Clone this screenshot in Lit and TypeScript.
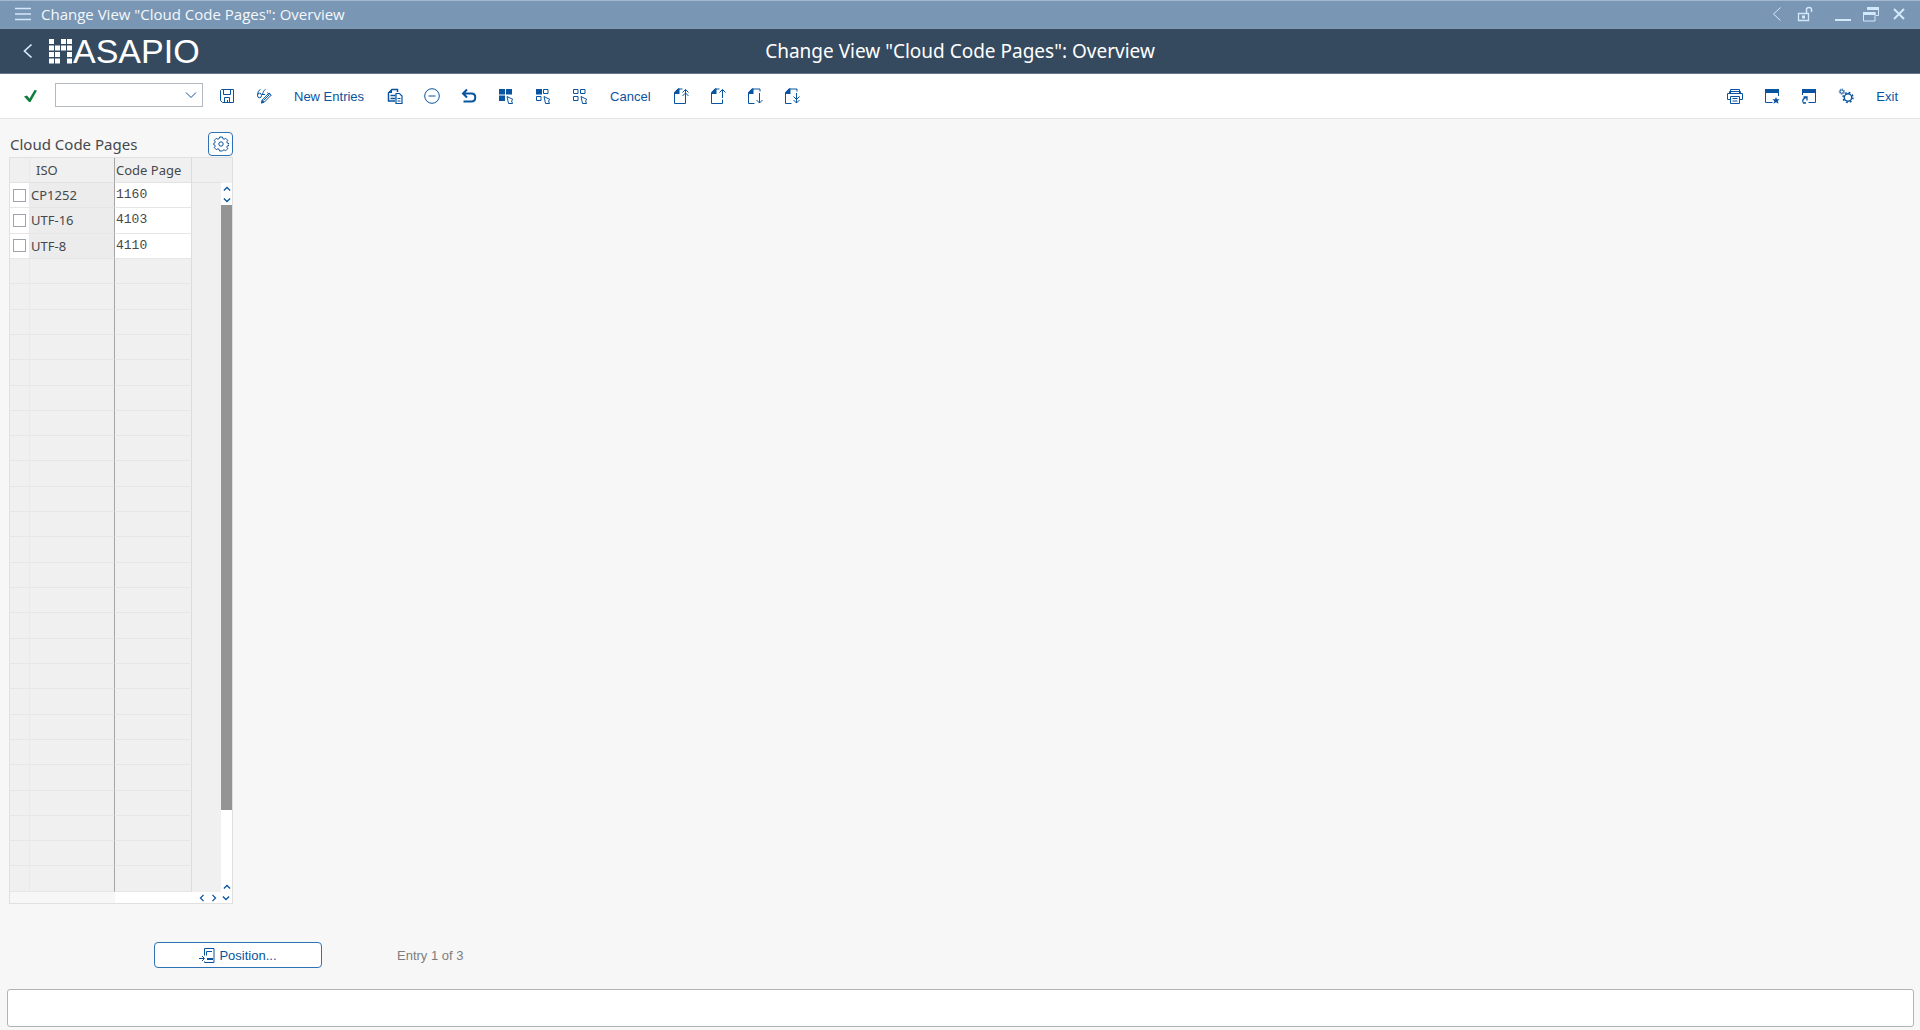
import { LitElement, html, css, svg } from "lit";
import { customElement } from "lit/decorators.js";

const TITLE = 'Change View "Cloud Code Pages": Overview';

const rows = [
  { iso: "CP1252", page: "1160" },
  { iso: "UTF-16", page: "4103" },
  { iso: "UTF-8", page: "4110" },
];
const emptyRows = Array.from({ length: 25 });

const cursor = svg`<path d="M9 8.5l6 3-1.500 1.200 1 2.800H10.500z"/>`;
const fold = svg`<path class="solid" d="M1 6V4.500L5 .5h1.500V6z"/>`;
const sheet = svg`<path d="M9.500 1H5L1.500 5v10.500h11"/>${fold}`;
const sheetOpen = svg`<path d="M13 3.500V1H5L1.500 5v10.500h6"/>${fold}`;

const icons = {
  menu: svg`<path d="M0 2.500h16M0 8h16M0 13.500h16" stroke-width="1.500"/>`,
  back: svg`<path d="M11.500 1.500L4.500 8l7 6.500"/>`,
  backBold: svg`<path d="M11.500 1.500L4.500 8l7 6.500" stroke-width="1.700"/>`,
  check: svg`<path class="solid" d="M2 8.500l3-1 2.500 3L12.500 2l2.500.5L8.500 14H7z"/>`,
  chevron: svg`<path d="M3 5.500l5 5 5-5"/>`,
  save: svg`<path d="M1.500 2.500l1-1h12v13h-11l-2-2zM4.500 1.500v5h7v-5M5.500 14.500v-5h5v5M8.500 12v2.500"/>`,
  glasses: svg`<path d="M4.500 1.500C2.500 2 1.500 5 1.500 7.500M9.500 1.500C8 2 7 4 6.500 6.500M1.500 7.500a2 2.300 0 1 0 4 0a2 2.300 0 1 0-4 0M5.500 6.500H9"/><path d="M5.500 15l.7-3L13 5l2.300 2L8.500 14z"/><path d="M11.500 4.500l2 2.500M7.500 12.500l5.500-5.500"/><path class="solid" d="M5 15.500l1-3.500 2.500 2z"/>`,
  copy: svg`<path class="solid" d="M1 5L5 1v4z"/><path d="M10.500 4V1.500H5L1.500 5v8H8M3.500 7.500h5M3.500 10.500h5" stroke-width="1.500"/><path d="M9 5.500h3.500l2.500 2.500v7.500H9z" stroke-width="1.200"/><path d="M10.500 10.500h3M10.500 13h3"/>`,
  minus: svg`<circle cx="8" cy="8" r="7.300"/><path d="M4.500 8h7"/>`,
  undo: svg`<path d="M6 1.500L2 5.500l4 4M2.500 5.500h8c5 0 5 8 0 8H2.500" stroke-width="2"/>`,
  selectAll: svg`<path class="solid" d="M1 1h6v5.500H1zM8 1h6v5.500H8zM1 7.500h6V13H1z"/>${cursor}`,
  selectBlock: svg`<path class="solid" d="M1 1h6v5.500H1z"/><path d="M8.500 1.500h4.500v4H8.500zM1.500 8.500h4.500v4H1.500z"/>${cursor}`,
  deselect: svg`<path d="M1.500 1.500h4.500v4H1.500zM8.500 1.500h4.500v4H8.500zM1.500 8.500h4.500v4H1.500z"/>${cursor}`,
  firstPage: svg`${sheet}<path d="M12.500 15.500V1.500M9.500 4.500l3-3 3 3M9.500 8l3-3 3 3"/>`,
  prevPage: svg`${sheet}<path d="M12.500 15.500v-4M12.500 10V1.500M9.500 4.500l3-3 3 3"/>`,
  nextPage: svg`${sheetOpen}<path d="M12.500 5v10M9.500 12l3 3 3-3"/>`,
  lastPage: svg`${sheetOpen}<path d="M12.500 5v10M9.500 8.500l3 3 3-3M9.500 12l3 3 3-3"/>`,
  print: svg`<path d="M3.500 5V1.500h9V5M3.500 11.500h-3V5.500h15v6h-3M2.500 5V3.500h11V5"/><path d="M3.500 8.500h9v7h-9zM5.500 10.500h5M5.500 13h5"/>`,
  newWindow: svg`<path class="solid" d="M1 1h14v4H1z"/><path d="M1.500 2v12.500h7M14.500 4v4"/><path class="solid" d="M12 9l1 2.300h2.700l-2 1.800.8 2.600-2.500-1.500-2.500 1.500.8-2.600-2-1.800H11z"/>`,
  shortcut: svg`<path class="solid" d="M1 1h14v4H1z"/><path d="M1.500 2v5M14.500 2v12.500H7.500"/><path d="M2.500 9H6v3.500M6 9c-4 1-5.500 4-3.500 6H5" stroke-width="1.300"/>`,
  gears: svg`<circle cx="10" cy="9.500" r="3.700" stroke-width="1.400"/><circle cx="10" cy="9.500" r="5" stroke-dasharray="1.900 2.027" stroke-width="1.400"/><circle cx="3.800" cy="3.600" r="1.700"/><circle cx="3.800" cy="3.600" r="2.600" stroke-dasharray="1 1.042"/>`,
  lock: svg`<path d="M1.500 7.500h10v7h-10z" stroke-width="1.300"/><path d="M9.500 7V3.500c0-2.800 5-2.800 5 0V6" stroke-width="1.500"/><path class="solid" d="M5 9.500h3v3H5z"/>`,
  minimize: svg`<path d="M0 14h16" stroke-width="2"/>`,
  restore: svg`<path d="M4.500 3.500v-2h11v8H13"/><path class="solid" d="M4 1h12v3H4z"/><path d="M.5 6.500H12V15H.5z"/><path class="solid" d="M0 6h12.500v3H0z"/>`,
  close: svg`<path d="M3 3l10 10M13 3L3 13" stroke-width="2"/>`,
  gear: svg`<circle cx="8" cy="8" r="2.200"/><path d="M6.600 1h2.800l.5 1.700 1.200.5 1.600-.9 2 2-.9 1.600.5 1.200 1.700.5v1.800l-1.700.5-.5 1.200.9 1.600-2 2-1.600-.9-1.200.5L9.400 15H6.600l-.5-1.700-1.200-.5-1.600.9-2-2 .9-1.600-.5-1.200L.5 8.400V7.600l1.200-.5.5-1.200-.9-1.600 2-2 1.600.9 1.200-.5z"/>`,
  position: svg`<path d="M5.500 8.500v-7H15v14M7.500 4.500H13M7.500 4.500v4M5.500 14.500v1H15"/><path class="solid" d="M8 11h6v2H8z"/><path d="M0 11.500h5M3 9l2.500 2.500L3 14"/>`,
};

const icon = (name: keyof typeof icons) =>
  html`<svg class="icon" viewBox="0 0 16 16" aria-hidden="true">${icons[name]}</svg>`;

type Tool = { icon?: keyof typeof icons; label: string };

const tools: Tool[] = [
  { icon: "save", label: "Save" },
  { icon: "glasses", label: "Display/Change" },
  { label: "New Entries" },
  { icon: "copy", label: "Copy As" },
  { icon: "minus", label: "Delete" },
  { icon: "undo", label: "Undo Change" },
  { icon: "selectAll", label: "Select All" },
  { icon: "selectBlock", label: "Select Block" },
  { icon: "deselect", label: "Deselect All" },
  { label: "Cancel" },
  { icon: "firstPage", label: "First Page" },
  { icon: "prevPage", label: "Previous Page" },
  { icon: "nextPage", label: "Next Page" },
  { icon: "lastPage", label: "Last Page" },
];

const endTools: Tool[] = [
  { icon: "print", label: "Print" },
  { icon: "newWindow", label: "New Window" },
  { icon: "shortcut", label: "Create Shortcut" },
  { icon: "gears", label: "Settings" },
  { label: "Exit" },
];

// Filled cells of the 4 x 4 logo mark.
const logoCells = [
  [0, 0], [2, 0], [3, 0],
  [0, 1], [1, 1], [2, 1], [3, 1],
  [0, 2], [1, 2], [3, 2],
  [0, 3], [1, 3], [3, 3],
];

@customElement("app-root")
export class AppRoot extends LitElement {
  static styles = css`
    :host {
      display: flex;
      flex-direction: column;
      min-height: 100vh;
      background: #f7f7f7;
      color: #45484b;
      font-family: "Noto Sans", "Liberation Sans", sans-serif;
      font-size: 13px;
    }
    * { box-sizing: border-box; }
    button {
      display: flex;
      align-items: center;
      justify-content: center;
      padding: 0;
      border: 0;
      background: none;
      color: inherit;
      font: inherit;
    }
    .icon {
      display: block;
      flex: none;
      width: 16px;
      height: 16px;
      fill: none;
      stroke: currentColor;
    }
    .solid { fill: currentColor; stroke: none; }

    .window-bar {
      display: flex;
      align-items: center;
      height: 29px;
      padding: 0 13px 2px 15px;
      border-top: 1px solid #a3b8ce;
      border-bottom: 1px solid #8299b1;
      background: #7996b5;
      color: #d3e8fb;
    }
    .window-title {
      flex: 1;
      margin-left: 10px;
      color: #f4f8fb;
      font-family: "Open Sans", "Noto Sans", sans-serif;
      font-size: 15px;
      line-height: 22px;
    }
    .window-actions { display: flex; gap: 12px; }
    .spaced { margin-left: 10px; }

    .header {
      display: grid;
      grid-template-columns: 1fr auto 1fr;
      align-items: center;
      height: 45px;
      padding: 0 20px;
      border-bottom: 1px solid #64768a;
      background: #354a5f;
      color: #fff;
    }
    .brand { display: flex; align-items: center; gap: 13px; }
    .back { color: #d1e8ff; }
    .logo {
      display: flex;
      align-items: center;
      gap: 1px;
      font: 34px/40px "Liberation Sans", sans-serif;
    }
    .logo-mark { width: 23px; height: 25px; fill: #fff; }
    h1 { margin: 0; font-size: 19px; line-height: 28px; font-weight: 400; }

    .toolbar {
      display: flex;
      align-items: center;
      gap: 8px;
      height: 45px;
      padding: 0 14px 0 15px;
      border-bottom: 1px solid #e4e4e4;
      background: #fff;
      color: #0854a0;
      font-family: "Liberation Sans", sans-serif;
    }
    .tool { width: 29px; height: 26px; }
    .tool.text { width: auto; padding: 0 8px; }
    .accept { color: #107e3e; }
    .command {
      display: flex;
      width: 148px;
      height: 24px;
      margin: 0 1px 2px 3px;
      border: 1px solid #b5bac0;
      background: #fff;
    }
    .command input {
      flex: 1;
      min-width: 0;
      padding: 0 4px;
      border: 0;
      background: none;
      outline: 0;
    }
    .command button { width: 22px; }
    .push { margin-left: auto; }

    main { flex: 1; padding: 12px 9px 0; }
    .panel { width: 224px; }
    .panel-head {
      display: flex;
      align-items: center;
      justify-content: space-between;
      height: 26px;
      padding-left: 1px;
    }
    h2 { margin: 0; font-size: 15px; line-height: 24px; font-weight: 400; }
    .settings {
      width: 25px;
      height: 24px;
      border: 1px solid #2f72b4;
      border-radius: 4px;
      background: #fff;
      color: #0854a0;
    }
    .grid {
      display: grid;
      grid-template-columns: 1fr 11px;
      border: 1px solid #e0e0e0;
      background: #f0f0f0;
    }
    table {
      width: 100%;
      height: 734px;
      border-collapse: separate;
      border-spacing: 0;
      table-layout: fixed;
    }
    .col-pick { width: 20px; }
    .col-iso { width: 85px; }
    .col-page { width: 77px; }
    th {
      height: 25px;
      padding: 0 1px;
      border-bottom: 1px solid #e2e2e2;
      font-weight: 400;
      text-align: left;
    }
    td {
      height: 25px;
      padding: 0 1px;
      border-bottom: 1px solid #e6e6e6;
      line-height: 20px;
    }
    .pick { border-right: 1px solid #e9e9e9; }
    .iso { border-right: 1px solid #a6a6a6; }
    th.iso { padding-left: 6px; }
    .page { border-right: 1px solid #dcdcdc; }
    td.page { font-family: "Liberation Mono", monospace; }
    .filled .pick, .filled .page { background: #fff; }
    .filled .iso { background: #ececec; }
    td.filler { border-bottom-color: transparent; }
    .pick input {
      appearance: none;
      display: block;
      width: 13px;
      height: 13px;
      margin: 0 0 0 2px;
      border: 1px solid #9da4ab;
      background: #fff;
    }
    .vbar {
      display: flex;
      flex-direction: column;
      margin-top: 25px;
      background: #fff;
      color: #0854a0;
    }
    .vbar button, .hbar button { height: 11px; }
    .hbar button { width: 12px; }
    .vbar .icon, .hbar .icon { width: 10px; height: 10px; stroke-width: 2; }
    .thumb { height: 605px; background: #949494; }
    .track { flex: 1; }
    .hbar {
      display: flex;
      grid-column: 1 / -1;
      background: #fff;
      color: #0854a0;
    }
    .hlead { width: 105px; background: #f7f7f7; }
    .turn-left { transform: rotate(90deg); }
    .turn-right { transform: rotate(-90deg); }
    .turn-up { transform: rotate(180deg); }

    .actions {
      display: flex;
      align-items: center;
      gap: 75px;
      margin: 38px 0 20px 145px;
      color: #7d7d7d;
      font-family: "Liberation Sans", sans-serif;
    }
    .position {
      gap: 4px;
      width: 168px;
      height: 26px;
      border: 1px solid #2f72b4;
      border-radius: 4px;
      background: #fff;
      color: #0854a0;
    }
    .message {
      height: 38px;
      margin: 0 6px 3px 7px;
      border: 1px solid #b3b3b3;
      border-radius: 3px;
      background: #fff;
    }
  `;

  private tool(t: Tool) {
    return t.icon
      ? html`<button class="tool" aria-label=${t.label}>${icon(t.icon)}</button>`
      : html`<button class="tool text">${t.label}</button>`;
  }

  private arrow(label: string, turn: string) {
    return html`<button aria-label=${label}>
      <svg class="icon ${turn}" viewBox="0 0 16 16" aria-hidden="true">${icons.chevron}</svg>
    </button>`;
  }

  render() {
    return html`
      <div class="window-bar">
        <button aria-label="Menu">${icon("menu")}</button>
        <div class="window-title">${TITLE}</div>
        <div class="window-actions">
          <button aria-label="Collapse">${icon("back")}</button>
          <button aria-label="Unlocked">${icon("lock")}</button>
          <button class="spaced" aria-label="Minimize">${icon("minimize")}</button>
          <button aria-label="Restore">${icon("restore")}</button>
          <button aria-label="Close">${icon("close")}</button>
        </div>
      </div>
      <header class="header">
        <div class="brand">
          <button class="back" aria-label="Back">${icon("backBold")}</button>
          <div class="logo">
            <svg class="logo-mark" viewBox="0 0 23 25" aria-hidden="true">
              ${logoCells.map(([x, y]) => svg`<rect x=${x * 6} y=${y * 6.5} width="5" height="5"/>`)}
            </svg>
            <span>ASAPIO</span>
          </div>
        </div>
        <h1>${TITLE}</h1>
      </header>
      <div class="toolbar" role="toolbar">
        <button class="tool accept" aria-label="Enter">${icon("check")}</button>
        <div class="command">
          <input type="text" aria-label="Command" />
          <button aria-label="Command history">${icon("chevron")}</button>
        </div>
        ${tools.map((t) => this.tool(t))}
        <div class="push"></div>
        ${endTools.map((t) => this.tool(t))}
      </div>
      <main>
        <section class="panel">
          <div class="panel-head">
            <h2>Cloud Code Pages</h2>
            <button class="settings" aria-label="Table settings">${icon("gear")}</button>
          </div>
          <div class="grid">
            <table>
              <colgroup>
                <col class="col-pick" /><col class="col-iso" /><col class="col-page" /><col />
              </colgroup>
              <thead>
                <tr>
                  <th class="pick"></th>
                  <th class="iso">ISO</th>
                  <th class="page">Code Page</th>
                  <th class="filler"></th>
                </tr>
              </thead>
              <tbody>
                ${rows.map(
                  (r) => html`<tr class="filled">
                    <td class="pick"><input type="checkbox" aria-label="Select ${r.iso}" /></td>
                    <td class="iso">${r.iso}</td>
                    <td class="page">${r.page}</td>
                    <td class="filler"></td>
                  </tr>`
                )}
                ${emptyRows.map(
                  () => html`<tr>
                    <td class="pick"></td><td class="iso"></td><td class="page"></td><td class="filler"></td>
                  </tr>`
                )}
              </tbody>
            </table>
            <div class="vbar">
              ${this.arrow("Row up", "turn-up")}
              ${this.arrow("Row down", "")}
              <div class="thumb"></div>
              <div class="track"></div>
              ${this.arrow("Page up", "turn-up")}
            </div>
            <div class="hbar">
              <div class="hlead"></div>
              <div class="track"></div>
              ${this.arrow("Scroll left", "turn-left")}
              ${this.arrow("Scroll right", "turn-right")}
              ${this.arrow("Page down", "")}
            </div>
          </div>
        </section>
        <div class="actions">
          <button class="position">${icon("position")}<span>Position...</span></button>
          <span>Entry 1 of 3</span>
        </div>
      </main>
      <div class="message" role="status"></div>
    `;
  }
}
